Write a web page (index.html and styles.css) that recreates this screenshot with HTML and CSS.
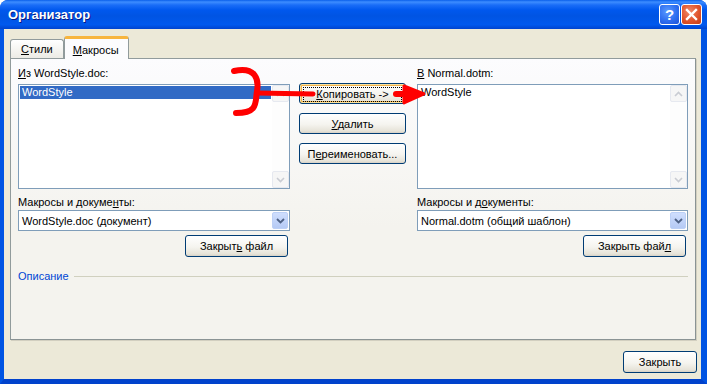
FILE: index.html
```html
<!DOCTYPE html>
<html lang="ru">
<head>
  <meta charset="UTF-8" />
  <title>Организатор</title>
  <link rel="stylesheet" href="styles.css">
</head>
<body>
  <div class="window">
    <div class="titlebar">
      <span class="title">Организатор</span>
      <div class="caption-btns">
        <span class="cap help">?</span>
        <span class="cap close">
          <svg width="13" height="13" viewBox="0 0 13 13"><path d="M2 2 L11 11 M11 2 L2 11" stroke="#fff" stroke-width="2.4" stroke-linecap="square"/></svg>
        </span>
      </div>
    </div>

    <div class="frame">
      <div class="tabs">
        <div class="tab"><u>С</u>тили</div>
        <div class="tab active"><u>М</u>акросы</div>
      </div>

      <div class="panel">
        <div class="columns">
          <div class="side left">
            <div class="label"><u>И</u>з WordStyle.doc:</div>
            <div class="listbox">
              <div class="items">
                <div class="item selected">WordStyle</div>
              </div>
              <div class="scroll">
                <span class="arrow"><svg width="9" height="6" viewBox="0 0 9 6"><path d="M1 5 L4.5 1.5 L8 5" fill="none" stroke="#c9ccd3" stroke-width="1.6"/></svg></span>
                <span class="arrow"><svg width="9" height="6" viewBox="0 0 9 6"><path d="M1 1 L4.5 4.5 L8 1" fill="none" stroke="#c9ccd3" stroke-width="1.6"/></svg></span>
              </div>
            </div>
            <div class="label combo-label">Макросы и докуме<u>н</u>ты:</div>
            <div class="combo">
              <span class="combo-text">WordStyle.doc (документ)</span>
              <span class="drop"><svg width="9" height="6" viewBox="0 0 9 6"><path d="M1 1 L4.5 4.5 L8 1" fill="none" stroke="#4d6185" stroke-width="1.8"/></svg></span>
            </div>
            <div class="btn-row">
              <button class="btn wide">Закрыт<u>ь</u> файл</button>
            </div>
          </div>

          <div class="middle">
            <button class="btn action default"><span class="focus"><u>К</u>опировать -&gt;</span></button>
            <button class="btn action"><u>У</u>далить</button>
            <button class="btn action">П<u>е</u>реименовать...</button>
          </div>

          <div class="side right">
            <div class="label"><u>В</u> Normal.dotm:</div>
            <div class="listbox">
              <div class="items">
                <div class="item">WordStyle</div>
              </div>
              <div class="scroll">
                <span class="arrow"><svg width="9" height="6" viewBox="0 0 9 6"><path d="M1 5 L4.5 1.5 L8 5" fill="none" stroke="#c9ccd3" stroke-width="1.6"/></svg></span>
                <span class="arrow"><svg width="9" height="6" viewBox="0 0 9 6"><path d="M1 1 L4.5 4.5 L8 1" fill="none" stroke="#c9ccd3" stroke-width="1.6"/></svg></span>
              </div>
            </div>
            <div class="label combo-label">Макросы и д<u>о</u>кументы:</div>
            <div class="combo">
              <span class="combo-text">Normal.dotm (общий шаблон)</span>
              <span class="drop"><svg width="9" height="6" viewBox="0 0 9 6"><path d="M1 1 L4.5 4.5 L8 1" fill="none" stroke="#4d6185" stroke-width="1.8"/></svg></span>
            </div>
            <div class="btn-row">
              <button class="btn wide">Закрыть фай<u>л</u></button>
            </div>
          </div>
        </div>

        <div class="desc">
          <span>Описание</span>
          <span class="rule"></span>
        </div>
      </div>

      <div class="footer">
        <button class="btn close-btn">Закрыть</button>
      </div>
    </div>

    <!-- красные пометки поверх окна -->
    <svg class="annot" width="707" height="384" viewBox="0 0 707 384">
      <path d="M234 71 C256 66 259 80 257 91 C255 102 259 113 236 113" fill="none" stroke="#f00" stroke-width="6" stroke-linecap="round"/>
      <path d="M257 93 L313 94" stroke="#f00" stroke-width="5" stroke-linecap="round"/>
      <path d="M396 94 L408 94" stroke="#f00" stroke-width="6" stroke-linecap="round"/>
      <path d="M404 86 L424 94 L404 103 Z" fill="#f00" stroke="#f00" stroke-width="3" stroke-linejoin="round"/>
    </svg>
  </div>
</body>
</html>
```

FILE: styles.css
```css
body {
  margin: 0;
  padding: 0;
  font-family: "Liberation Sans", Arial, sans-serif;
  font-size: 11px;
  color: #000;
  background: #fff;
}

.window {
  position: relative;
  width: 707px;
  height: 384px;
  display: flex;
  flex-direction: column;
  background: #0054e3;
  border-radius: 8px 8px 0 0;
  overflow: hidden;
}

.titlebar {
  height: 29px;
  flex: none;
  box-sizing: border-box;
  display: flex;
  align-items: center;
  justify-content: space-between;
  padding: 0 5px 1px 8px;
  background: linear-gradient(#0a5fea 0, #3d8dff 2px, #1a6df7 5px, #0058ee 10px, #0054e3 55%, #0059ee 85%, #0044cf 100%);
}

.title {
  color: #fff;
  font-weight: bold;
  font-size: 13px;
  text-shadow: 1px 1px 0 #0a1883;
}

.caption-btns {
  display: flex;
  gap: 1px;
}

.cap {
  width: 21px;
  height: 21px;
  box-sizing: border-box;
  border: 1px solid #fff;
  border-radius: 3px;
  display: flex;
  align-items: center;
  justify-content: center;
  color: #fff;
}

.help {
  background: radial-gradient(circle at 40% 35%, #5b9bff 0, #2f6ff0 55%, #1c52d8 100%);
  font-weight: bold;
  font-size: 15px;
}

.close {
  background: radial-gradient(circle at 40% 35%, #f08a6a 0, #e0542c 55%, #c43d17 100%);
}

.frame {
  flex: 1;
  display: flex;
  flex-direction: column;
  background: #ece9d8;
  border-left: 4px solid #0054e3;
  border-right: 6px solid #0054e3;
  border-bottom: 5px solid #0042cc;
  padding: 7px 5px 0 6px;
}

.tabs {
  display: flex;
  align-items: flex-end;
  height: 23px;
  margin-bottom: -1px;
  position: relative;
  z-index: 1;
}

.tab {
  height: 19px;
  box-sizing: border-box;
  margin-bottom: 1px;
  padding: 3px 10px 0 10px;
  border: 1px solid #919b9c;
  border-bottom: none;
  border-radius: 3px 3px 0 0;
  background: linear-gradient(#fff, #ecebe5);
}

.tab.active {
  height: 23px;
  margin-bottom: 0;
  padding: 5px 9px 0 8px;
  border-top: 3px solid #f7b53e;
  background: #fcfcfe;
}

.panel {
  height: 282px;
  box-sizing: border-box;
  border: 1px solid #919b9c;
  border-right-color: #8a9394;
  border-bottom-color: #8a9394;
  box-shadow: 1px 1px 0 #d2cfc0;
  background: linear-gradient(#fcfcfe, #f4f3ee 60%);
  padding: 8px 7px 0 7px;
}

.columns {
  display: flex;
}

.side.left {
  width: 272px;
}

.side.right {
  width: 271px;
  margin-left: 11px;
}

.middle {
  width: 107px;
  margin-left: 9px;
  padding-top: 16px;
  display: flex;
  flex-direction: column;
  gap: 9px;
}

.label {
  line-height: 13px;
  margin-bottom: 4px;
}

.combo-label {
  margin-top: 7px;
  margin-bottom: 1px;
}

.listbox {
  height: 105px;
  box-sizing: border-box;
  border: 1px solid #7f9db9;
  background: #fff;
  display: flex;
}

.items {
  flex: 1;
  padding: 1px;
}

.item {
  line-height: 13px;
  padding-left: 2px;
}

.item.selected {
  background: #316ac5;
  color: #fff;
}

.scroll {
  width: 17px;
  display: flex;
  flex-direction: column;
  justify-content: space-between;
  background: #fdfdfd;
}

.arrow {
  height: 17px;
  box-sizing: border-box;
  border: 1px solid #e6e9f0;
  border-radius: 2px;
  background: #f6f6f6;
  display: flex;
  align-items: center;
  justify-content: center;
}

.combo {
  height: 21px;
  box-sizing: border-box;
  border: 1px solid #7f9db9;
  background: #fff;
  display: flex;
  align-items: center;
  padding: 1px;
}

.combo-text {
  flex: 1;
  padding-left: 2px;
}

.drop {
  width: 16px;
  height: 17px;
  box-sizing: border-box;
  border: 1px solid #bcd0f6;
  border-radius: 2px;
  background: linear-gradient(#cfdefd, #b5caf5);
  display: flex;
  align-items: center;
  justify-content: center;
}

.btn-row {
  display: flex;
  justify-content: flex-end;
  margin-top: 4px;
  padding-right: 2px;
}

.btn {
  font-family: inherit;
  font-size: 11px;
  color: #000;
  height: 22px;
  box-sizing: border-box;
  border: 1px solid #003c74;
  border-radius: 3px;
  background: linear-gradient(#ffffff 0, #f5f4ef 55%, #e6e3d8 90%, #d6d0c5 100%);
  padding: 0;
  cursor: pointer;
}

.btn.wide {
  width: 103px;
}

.btn.action {
  width: 107px;
  height: 21px;
}

.btn.default {
  padding: 3px;
  box-shadow: inset 0 0 0 1px #fce3a3, inset 0 0 0 2px #f0b34a;
}

.focus {
  display: block;
  height: 13px;
  line-height: 13px;
  border: 1px dotted #000;
}

.desc {
  display: flex;
  align-items: center;
  margin-top: 13px;
  line-height: 13px;
  color: #0046d5;
}

.rule {
  flex: 1;
  margin-left: 5px;
  border-top: 1px solid #d0d0bf;
}

.footer {
  display: flex;
  justify-content: flex-end;
  padding-top: 11px;
  margin-right: -1px;
}

.btn.close-btn {
  width: 74px;
}

.annot {
  position: absolute;
  top: 0;
  left: 0;
  pointer-events: none;
}
```
